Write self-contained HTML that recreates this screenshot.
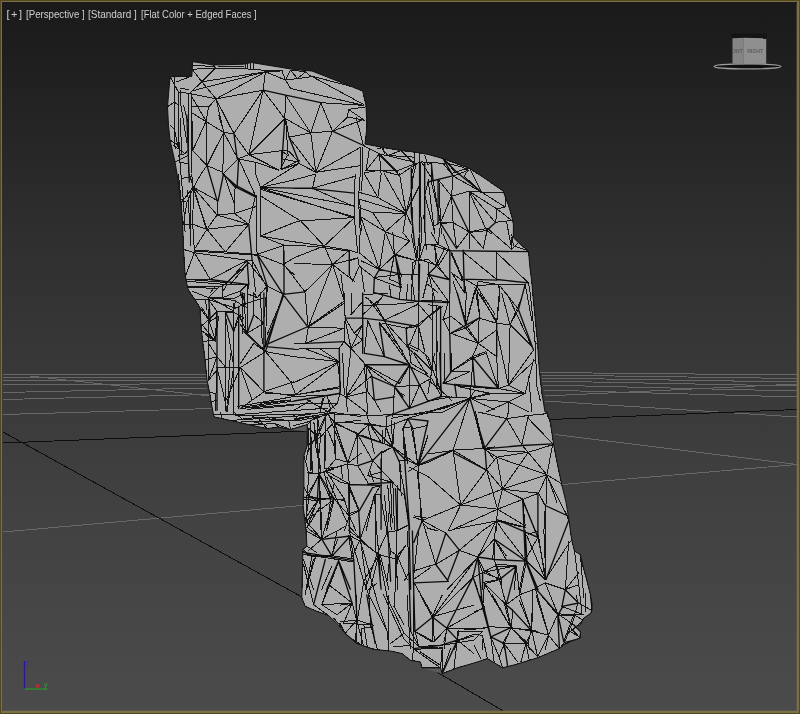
<!DOCTYPE html>
<html lang="en">
<head>
<meta charset="utf-8">
<title>Perspective viewport</title>
<style>
  html, body { margin: 0; padding: 0; background: #1c1c1c; }
  body { width: 800px; height: 714px; overflow: hidden; position: relative;
         font-family: "Liberation Sans", "DejaVu Sans", sans-serif; }
  #viewport { position: absolute; left: 0; top: 0; width: 800px; height: 714px;
              background: linear-gradient(to bottom, #1a1a1a 0px, #1c1c1c 30px, #262626 140px, #303030 250px, #393939 384px, #424242 518px, #4a4a4a 688px, #4b4b4b 714px); }
  #scene { position: absolute; left: 0; top: 0; width: 800px; height: 714px; display: block; will-change: transform; }
  #label { position: absolute; left: 0; top: 7px; width: 270px; height: 14px; will-change: transform; color: #cfcfcf; font-size: 11px; line-height: 14px;
           white-space: pre; }
  #label span { position: absolute; top: 0; display: block; transform-origin: 0 50%; white-space: pre; }
  #l1 { left: 6.4px; letter-spacing: 1.6px; }
  #l2 { left: 26px; transform: scaleX(0.88); }
  #l3 { left: 88.3px; transform: scaleX(0.907); }
  #l4 { left: 140.8px; transform: scaleX(0.862); }
  #frame { position: absolute; left: 0; top: 0; width: 800px; height: 714px; box-sizing: border-box;
           border: 1px solid #54481f; pointer-events: none; }
  #frame::before { content: ""; position: absolute; left: 0; top: 0; right: 0; bottom: 0;
           border: 2px solid #7c6f48; border-top-width: 1.6px; border-left-width: 1.6px; }
  #frame::after { content: ""; position: absolute; left: 2px; top: 2px; right: 2px; bottom: 2px;
           border: 1px solid transparent; border-right-color: rgba(112,102,66,0.4); border-bottom-color: rgba(112,102,66,0.4); }
</style>
</head>
<body>
<div id="viewport">
<svg id="scene" width="800" height="714" viewBox="0 0 800 714">
  <g id="grid" fill="none" stroke-width="1" shape-rendering="crispEdges">
    <g stroke="#686868">
      <path d="M3 374.5L210 374.5M540 372.5L797 375M3 377.5L208 377M541 375L797 378.5M3 380.5L208 380M541 378L797 382
               M3 385L208 383.5M541 381L797 386M3 392.5L208 388M542 385L797 391M3 399.5L210 394.5M543 390L797 397
               M3 414.5L212 408.5M545 401L797 417M30 376L210 396M545 396L797 384
               M3 532L302 505.5M562 484.5L797 464.5M555 434.5L797 464.5"/>
    </g>
    <g stroke="#0e0e0e">
      <path d="M3 443L307 431M550 419.5L797 409.5M3 432L302 597M430 668L505 712"/>
    </g>
  </g>
  <path id="backfaces" d="M290.5 429.6L307.2 424.6L307.2 431.5ZM422 667.9L440.5 667.9L442.2 673.7Z" fill="#5c5c5c"/>
  <clipPath id="rockclip"><polygon points="192.7,61.7 213.6,65 243.8,64.2 251.3,62.5 294,69.5 312,71 352.6,87 362.7,91 366,105 367,127 365,144 381,147 401,150.5 415,152 428,154.4 443,158.5 470,168.6 486.6,179.5 503.4,191.2 507.6,202.5 511.7,216 513.4,224 513.4,237.6 518.5,242.7 528.5,251 530,268 532,283 532.7,293 534.4,309.7 536,326.5 537.7,343 538.5,360 540,376.7 542,393.5 545,412 547,412 550.3,422 553.6,443.8 557,462 562,485.7 566,502 569,520 570.4,531 572,541 574.5,551 580.4,554.5 583,566 587,581 590.5,594.7 592,603.4 592,609.7 591.3,613 583.8,618 580.4,624.8 575.4,626.5 580.4,631.5 580.4,638 570.4,641.6 563.7,645 559.4,648.6 537.7,657.8 515.9,664.5 502.5,667.9 495.8,663.7 487.4,658.7 474,663 457.3,667.9 442.2,673.7 440.5,667.9 422,667.9 420.4,662 410.4,660.3 402,653.6 390.3,651 373.5,649.4 356.8,643.6 345,633.5 338,624.5 328.6,615.6 316.9,611.4 305.2,606.4 301.8,598 302.7,556 302.7,549.4 306.9,546 306,531 304.7,519 303,505.8 303.9,487.4 303.9,455.6 307.2,445.5 307.2,424.6 290.5,429.6 278.7,427 267,428.7 248.6,424.6 230,420.4 214.2,417 213,412 211,402 209.4,391.8 207,380 205,360 202.7,341.6 201,326.5 200,308 195,299.7 190,293 187.6,288 185,274.5 183.5,249.4 182.6,224 181.8,212 178.4,182 175,162 170,140 168.5,125.4 167.5,107 170,76.8 191.8,76"/></clipPath>
  <polygon id="rock" points="192.7,61.7 213.6,65 243.8,64.2 251.3,62.5 294,69.5 312,71 352.6,87 362.7,91 366,105 367,127 365,144 381,147 401,150.5 415,152 428,154.4 443,158.5 470,168.6 486.6,179.5 503.4,191.2 507.6,202.5 511.7,216 513.4,224 513.4,237.6 518.5,242.7 528.5,251 530,268 532,283 532.7,293 534.4,309.7 536,326.5 537.7,343 538.5,360 540,376.7 542,393.5 545,412 547,412 550.3,422 553.6,443.8 557,462 562,485.7 566,502 569,520 570.4,531 572,541 574.5,551 580.4,554.5 583,566 587,581 590.5,594.7 592,603.4 592,609.7 591.3,613 583.8,618 580.4,624.8 575.4,626.5 580.4,631.5 580.4,638 570.4,641.6 563.7,645 559.4,648.6 537.7,657.8 515.9,664.5 502.5,667.9 495.8,663.7 487.4,658.7 474,663 457.3,667.9 442.2,673.7 440.5,667.9 422,667.9 420.4,662 410.4,660.3 402,653.6 390.3,651 373.5,649.4 356.8,643.6 345,633.5 338,624.5 328.6,615.6 316.9,611.4 305.2,606.4 301.8,598 302.7,556 302.7,549.4 306.9,546 306,531 304.7,519 303,505.8 303.9,487.4 303.9,455.6 307.2,445.5 307.2,424.6 290.5,429.6 278.7,427 267,428.7 248.6,424.6 230,420.4 214.2,417 213,412 211,402 209.4,391.8 207,380 205,360 202.7,341.6 201,326.5 200,308 195,299.7 190,293 187.6,288 185,274.5 183.5,249.4 182.6,224 181.8,212 178.4,182 175,162 170,140 168.5,125.4 167.5,107 170,76.8 191.8,76" fill="#aeaeae" stroke="#111" stroke-width="1" stroke-linejoin="round"/>
  <g clip-path="url(#rockclip)">
  <path id="edges" d="M225.3 311.4L225.3 410.3M261.3 188.2L353.5 217.6M261.3 189.6L353.5 216.7M188.8 93.5L188.8 172.3M191.5 93.5L191.5 172.3M436.4 309.8L436.4 386.8M191.8 91L265.5 71.8M433 293L432.2 368.4M290.6 88.5L363.5 105.3M477.7 557L433.3 616.4M208.6 309.8L208.6 380.1M332.5 264.2L308.2 327.3M243.8 408.2L310.8 403.2M420.5 174L421.3 241M250.3 415.4L317.3 413.7M263 90.2L248.8 154.7M201.9 81.8L265.5 71.8M233.7 303.1L233.7 366.7M194.3 251.1L257.2 255.2M360.5 541.1L377.2 601.4M294 194.3L353.5 205.8M510.1 324.8L508.4 385.1M310.8 75.9L363.5 104.4M506.7 293L531.9 346.6M369.4 415.4L428 413.7M267.2 285.9L265.5 344.5M396.4 530.8L397.2 589.2M237.1 406.6L294 396.5M178.4 91.9L178.4 148.8M375.4 493.7L375.4 550.7M339.2 361.7L294 396M496.7 329.9L508.4 385.1M216.1 98.9L265.5 71.8M546.9 474.8L545.2 531M327.5 411.6L347.6 463.5M428 178.7L434.7 233.9M319.3 475.3L321.9 530.8M418 465.6L421.3 520.9M319.1 474L320.8 529.3M190.2 190.8L191 246M361 217.6L379.4 269.5M472.7 577.9L433.3 616.4M453.1 450.5L460.7 505M469.9 398.2L453.1 450.1M391.2 418.3L444.8 408.2M240.4 408.6L294 401M407 595L410.4 648.6M325.6 415.4L324 469M388.6 595L388.6 648.6M413.7 595L413.7 648.6M194.3 252.7L247.1 260.3M496.7 457.2L546.9 474.8M300.7 220.9L353.5 217.6M225.3 314.8L233.7 366.7M263 90.2L233.7 133.7M497.5 509.2L449.8 530.9M174.2 76.8L174.2 128.7M484.4 583.8L511.2 628.2M361 147.1L315.8 172.3M379.4 323.2L409.6 365M284.8 118.7L248.8 154.7M530.2 293L535.2 343.3M396.4 530.8L395.6 581.3M277.3 411.6L327.5 408.2M230.4 353L227.8 403.2M243.8 418.3L294 416.6M384.5 321.5L409.6 365M260.5 293L262.2 343.3M252.1 421.6L302.4 420M310.8 420L310.8 470.2M339.2 361.7L294 382.6M326.8 477L346.9 522.2M360.3 539L367 587.5M359.3 199.1L406.2 213.4M351 348.3L345.9 396.9M422.3 520.5L417.3 472M535.2 588L548.6 634.9M568.7 541.1L565.3 589.6M543.9 531L545.9 579.6M545.2 531L545.2 579.6M260.5 187.4L260.5 236M383.6 595L403.7 638.6M216.1 98.9L263 90.2M375.4 493.7L360.3 539M243.8 406.9L290.7 400.2M314.1 423.3L320.8 470.2M526.8 535.6L545.3 579.2M350.4 536L363.8 581.3M247.1 409.4L294 405.2M397.3 559.5L394 606.4M392.8 482.4L394.5 529.3M356.8 595L356.8 641.9M546.9 474.8L502.5 489.1M307.4 453.5L327.5 411.6M294 395.2L339.2 386.8M570.4 541.1L545.2 579.6M338.7 562L321.9 604.7M312.4 188.2L354.3 206.7M315.8 172.3L361 165.6M233.7 366.7L227 411.9M422.3 520.5L435.7 564.1M294 356.7L339.2 361.7M285.6 95.2L310.8 132.9M260.5 187.4L299 163.6M411.3 187L412.9 232.2M436.4 306L437.2 351.2M294 349.1L339.2 348.3M256.3 195.8L256.3 241M233.7 369.7L233.7 414.9M528.5 452.2L502.5 489.1M384.5 174L406.2 213.4M502.5 489.1L460.7 505M484.1 449.7L528.5 452.2M206.1 121.2L206.9 165.6M496.7 520.9L453.1 529.3M378.9 554.5L387.3 598M332.5 131.2L315.8 172.3M289 137.1L315.8 172.3M546.9 476.2L567 515.5M344.3 301L308.2 326.4M295.7 394.8L339.2 388.1M538.5 536L545.2 579.6M538.6 493.2L497.5 509.2M469.9 398.5L428 412M193.5 187.4L206.9 229.3M193.5 188.7L206.9 230.5M453.1 280.9L466.5 322.7M496.7 252.7L528.5 282.9M477.6 557.4L447.4 589.2M486.6 469.8L460.7 505M387.8 485.7L391.2 529.3M580.4 554.5L583.8 598M233.7 414.9L277.3 411.6M535.2 343.3L536.9 386.8M355.1 174L354.3 217.6M325.8 416.6L325.8 460.2M409.6 365L409.6 408.6M397.9 485.7L397.9 529.3M284 294.3L267.2 334.5M432.1 616.8L474 605.1M312.4 188.2L354.3 176.5M344.3 303.1L308.2 327.3M460.7 505L428 476.5M310.8 75.9L352.6 86.8M312.4 70.9L352.6 86.8M508.4 385.1L533.5 350M469 191.2L486.6 230.6M537.9 537.3L546.3 579.2M334.2 422.1L347.6 462.3M496.8 519.7L477.6 557.4M464 252.7L496.7 279.5M206.9 229.3L248.8 224.3M418.5 531L414.1 572.9M536 595L548.5 635.2M187.6 190.3L190.2 232.2M320.8 102.7L362.7 105.3M407.4 531L409 572.9M440.6 222.2L438.9 180.3M342.6 353L344.3 394.8M327.5 413.7L369.4 415.4M294 396.5L335.9 394.8M302.7 556.1L301.8 598M407.9 418.3L448.1 406.6M333.5 498.8L321.8 539M422.3 520.5L460.8 504.6M223.7 132.4L222.8 174M247.1 260.3L210.3 279.5M303.5 564.5L313.6 604.7M368.8 594.7L378.9 554.5M305.7 343.3L344.3 328.2M431.4 182L440.6 222.2M446.7 628.2L482.7 608.1M368.8 594.7L387.3 631.5M469 191.2L469 232.3M486.6 469.8L497.5 509.2M363.8 581.3L357.1 621.5M433 180.3L439.7 220.5M238.7 158.9L255.5 195.8M469 191.2L495 222.2M186.8 281.2L227 284.6M186.8 279.3L227 282.6M454.8 385.5L495 388.8M384.5 321.1L411.3 351.2M469.9 398.2L473.2 358M353.5 218.4L324.2 246M247.1 293L247.1 333.2M449.8 293L449.8 333.2M217 370.1L215.3 410.3M390.5 482L392.2 522.2M531.3 629.8L533 589.6M242.1 293L242.9 333.2M244.6 293L245.4 333.2M334.2 413.3L334.2 453.5M474.9 287.6L496.7 321.1M399.5 174L406.2 213.4M367.7 320.6L384.5 356.7M310.8 132.9L315.8 172.3M260.5 195.8L294 217M265.5 351.6L290.7 381.8M521.8 444.7L546.9 474.8M418 465.2L411.3 426.7M311.9 556.1L305.2 594.7M453.1 450.1L486.6 470.2M216.1 98.9L233.7 133.7M387.3 598L404 633.2M485.8 351.6L498.4 388.5M332.5 264.5L304.9 291.8M332.5 264.1L344.3 301M469.9 398.5L508.4 401.9M414.1 582.9L433.3 616.4M412.9 262.4L411.3 301M310.8 432.1L312.4 470.6M294 263.6L332.5 264.5M366 365L399.5 383.5M424.7 195.4L434.7 232.2M476.6 285.9L466.5 322.7M385.3 231.8L379.4 269.5M503.1 531L526.3 561.2M474.1 412L483.3 448.9M475.6 412L483.9 448.9M374.4 494.1L366 530.9M192.7 150.5L191.8 112.8M446.7 628.2L484.4 628.2M304.1 348.3L339.2 361.7M366 365L345.9 396.9M510.9 627.7L492.4 595M225.3 401.9L240.4 367.5M525.2 284.3L531.9 321.1M380.4 495.4L387.1 532.3M191.8 112.8L223.7 132.4M180.9 105.3L186.8 142.1M364.4 364.7L394.5 386.5M412.9 428.8L418 465.6M223.7 132.4L206.9 165.6M384.5 320.2L418 304.3M460.7 505L497.5 509.2M377.1 554L365.4 589.2M519.6 594.7L531.3 629.8M180.1 165.2L183.5 202.1M374.4 494.1L376.6 531M285.6 118.7L288.1 155.5M362.7 305.6L399.5 303.9M317.5 437.1L319.1 474M379.4 322.7L402.9 351.2M178.4 128.4L180.1 165.2M334.2 422.1L335.9 458.9M193.5 187.4L192.7 224.3M317.5 416.6L317.5 453.5M508.4 385.1L535.2 360M502.5 489.1L538.6 493.2M193.5 187.4L217 215M248.8 224.3L225.3 251.9M379.4 153.8L414.6 162.2M260.5 236L294 222.6M308.2 327.3L344.3 328.2M214.2 414.5L250.3 415.4M531.8 631L532.6 595M263 90.2L284.8 118.7M283.1 263.3L304.9 291.8M334.2 499.1L305.7 520.9M304.9 291.8L308.2 327.3M402.9 428.8L407.9 463.9M314.1 246.5L349.3 251.1M384.5 495.8L387.9 531M217 367.5L225.3 401.9M500 286L496.7 321.1M528.5 376.8L531.9 411.9M354.3 217.6L357.7 252.7M180.1 118.3L181.8 153.5M334.2 422.1L369.4 423.7M528.5 418.7L552.8 443.8M240.4 367.5L252.1 400.2M248.8 154.7L283.1 150.5M525.2 393.5L533.5 360M380.4 555.7L388.8 589.2M479.9 293L496.7 323.2M300.7 220.9L324.2 246M216.1 98.9L223.7 132.4M187.6 286L222 286M260.5 187.4L294 179.9M522.6 499.1L535.2 530.9M260.5 187.4L294 194.3M526.3 561.2L519.6 594.7M482.6 572.5L516.1 565.8M260.5 236L294 241.8M325.8 470.6L344.3 499.1M361 435L392.8 446.8M476.6 285.9L495 314.4M327.5 411.6L361 416.6M294 418.7L327.5 413.7M404.6 495.8L409.6 529.3M294 416.6L327.5 411.6M240.4 367.5L263.9 391.8M574.5 551.1L578.7 584.6M423.8 215.9L426.3 249.4M258.6 418.7L292.1 420.4M399.5 462.3L401.2 495.8M174.2 115L175.1 148.5M372.7 212.5L406.2 213.4M418 293L418 326.5M491.7 393.5L525.2 393.5M545.2 582.9L557.8 613.9M519.2 600L531.8 631M371.9 375.9L345.9 396.9M369.4 423.7L392.8 447.2M217 215L248.8 224.3M332.5 131.2L363.5 119.5M428.8 274.2L448.1 301M474.1 293L465.7 324.8M501.7 293L510.1 324.8M367.7 320.6L364.4 353.3M469 191.2L496.7 208.8M334.2 499.1L326.6 530.9M453.1 176.1L481.6 192.1M377.8 197.5L406.2 213.4M496.7 457.2L502.5 489.1M324.2 246L294 257.8M497.5 509.2L525.2 525.9M206.1 121.2L192.7 150.5M496.7 457.2L528.5 452.2M330.7 499.1L326.6 530.9M487.5 228.4L511.8 249.4M267.2 286L263.9 317.8M402.9 428.3L406.2 460.2M476.6 285.9L479.9 317.7M225.3 251.9L257.2 254.4M496.7 356.7L498.4 388.5M358.5 199.1L360.2 231M359.7 199.1L361.3 231M453.1 450.1L485 448.4M466.1 293L465.7 324.8M366 170.6L397.9 170.6M303.9 455.6L303.9 487.4M349.9 484L349.9 515.9M377.2 601.4L387.3 631.5M263.9 391.8L294 381.8M357.7 433.4L347.6 463.5M428 435.5L418 465.6M320.8 102.7L310.8 132.9M303.4 559.1L313.4 589.2M411.3 350L428 376.8M552.8 443.8L546.9 474.8M252.1 260.3L267.2 287.9M194.3 252.7L210.3 279.5M252.1 260.3L255.5 291.3M418 324.4L443.1 306M392.8 446.8L418 465.2M194.3 250.2L225.3 251.9M458.2 386.5L488.3 393.2M313.4 559.1L306.7 589.2M320.8 102.7L332.5 131.2M510.1 324.8L531.9 346.6M378.9 554.5L363.8 581.3M415.4 650.3L440.5 667.9M444.2 644.9L474.4 639.9M474.9 287.6L479.9 317.8M359.3 215.9L385.3 231.8M263.9 391.8L294 396M294 241.8L324.2 246M500 293L496.7 323.2M260.5 403.2L290.7 399.9M578.7 584.6L582.1 614.8M390.5 550.7L387.1 580.8M247.1 260.3L227 282.9M484.4 583.8L506.2 604.7M321.9 604.7L352.1 603M223.7 173.6L233.7 202.1M183.5 202.1L185.1 232.2M265.5 393.2L295.7 394.8M394.5 386.5L392.8 416.6M402.9 428.8L404.6 458.9M368.8 594.7L370.5 624.8M418.8 261.1L418 291.3M215.3 68.1L245.4 68.7M444.8 353L444.8 383.1M528.5 415.4L521.8 444.7M223.7 132.4L237.9 158.9M357.7 434.6L372.7 460.6M506.7 418.7L521.8 444.7M191 95.2L206.1 121.2M469.9 398.5L443.1 412M419.6 185.3L406.2 212.1M482.2 531L459.3 550.3M525.3 559.9L519.5 589.2M500 286L518.5 309.4M328.6 584.6L352.1 603M248.8 262.5L267.2 286M240.4 367.5L265.5 351.6M315.2 557.8L306.9 586.3M372.7 460.6L392.8 482.4M227 282.6L248.8 262.5M356 117L363.5 145.5M450.6 333.2L478.3 343.3M546.9 474.8L557 502.5M357.7 434.6L357.7 463.9M496.7 520.9L525.2 527.6M367.7 425L374.4 453.5M255.5 195.8L248.8 224.3M469.9 371.7L443.1 383.5M451.5 254.4L463.2 281.2M510.1 324.8L521.8 298M451.5 252.4L463.2 279.2M478.3 412L506.7 418.7M206.9 229.3L225.3 251.9M345.1 319.8L351 348.3M349.5 530.8L353.8 559.5M265.5 351.6L294 356.7M285.6 118.7L310.8 132.9M460.7 505L448.1 530.9M303.5 554.5L332 558.6M399.5 303.9L428 300.1M516.2 566.2L519.6 594.7M457.3 640.2L453.9 668.7M573.7 614.8L563.7 641.6M443.1 158.6L469.9 168.6M374.4 277.9L401.2 287.9M317.3 500.8L307.2 527.6M230.4 284.3L248.8 262.5M413.7 649.4L442.2 647.8M230.2 420.4L258.6 418.7M215.3 339.9L217 311.4M441.4 396.5L469.9 398.2M253.8 69.7L282.3 70.9M321.8 539L346.9 525.6M379.4 155.2L399.5 175.3M257.2 254.4L284 245.2M451.5 196.2L440.6 222.2M367.7 298L384.5 320.6M208.6 299.7L235.4 308.1M406.2 213.4L385.3 231.8M481.6 192.1L505.1 207.1M564.5 642.7L574.5 616.8M257.2 254.4L283.1 264.5M193.5 187.4L217.8 200.8M469.9 398.2L495 409.9M318.9 474L330.7 499.1M453.1 450.5L428 462.3M187.6 287.9L215.3 286.2M412.9 185.3L406.2 212.1M324 472.3L330.7 499.1M418 324.4L424.7 351.2M332.5 264.5L354.3 281.2M459.3 550.3L435.8 564.5M189.3 93.5L216.1 98.9M362.7 314.8L382.8 296.4M506.7 222.6L511.8 249.4M498.4 388.5L525.2 393.5M315.6 445.5L320.6 472.3M349.3 485.7L359.3 510.8M444.8 408.2L469.9 398.2M325.8 470.6L349.3 484M210.3 297.7L233.7 311.1M374.4 277.5L401.2 274.2M334.2 423.3L361 420M364.4 174L377.8 197.5M522.6 499.1L525.2 525.9M343.7 623.1L370.5 624.8M387.8 155.5L414.6 157.2M366 365L367.7 391.8M391.2 420L392.8 446.8M361 147.1L360.2 174M362.7 147.1L362.7 174M248.6 424.6L275.4 423.7M447.2 628.5L474 629.3M496.7 252.7L496.7 279.5M498.4 284.6L525.2 284.6M306.7 495.4L306.7 522.2M340.9 274.5L344.3 301M531.8 631L537.7 657M422.3 520.5L445.8 533.1M334.2 422.1L357.7 434.6M306.7 522.2L319.3 498.8M472.4 356.7L450.6 371.7M450.6 648.6L442.2 673.7M469.9 168.6L481.6 192.1M351 348.3L362.7 324.8M453.1 222.6L456.5 248.5M379.4 269.5L359.3 252.7M483.3 174L503.4 190.8M541 595L557.8 615.1M379.4 153.8L397.9 172.3M526.8 561.2L545.2 579.6M451.5 196.2L453.1 222.2M367.7 475.7L392.8 482.4M332.5 264.5L357.7 257.8M357.1 621.5L363.8 646.6M500 520.5L525.2 527.2M499.5 579.6L506.2 604.7M385.3 231.8L409.6 241M557.8 613.9L583.8 614.8M442.2 647.8L442.2 673.7M537.9 537.3L525.3 559.9M428.8 274.2L434.7 299.3M233.7 133.7L248.8 154.7M411.3 234L416.3 259.1M394.5 254.1L389.5 279.2M302.4 420L327.5 414.9M292.1 420.4L317.3 415.4M337 531L332 556.1M473.2 358L451.5 371.4M307.2 527.6L320.6 505.8M334.2 423.3L357.7 433.4M419.6 385.1L409.6 408.6M348.6 487L358.7 510.5M331.9 565.8L321.8 589.2M397.2 555.7L407.2 579.2M432.2 368.4L428 393.5M324.2 246L349.3 250.2M528.5 452.2L552.8 444.7M411.3 274.2L414.6 299.3M416.3 259.1L419.6 234M434.7 361.3L438.1 386.5M285.6 80.1L310.8 76.8M215.3 341.2L218.6 316.1M309.1 495.8L305.7 520.9M428 453.9L453.1 450.5M490.8 636.9L494.1 662M337.6 363L340.9 388.1M178.4 174L180.9 199.1M360.2 174L358.5 199.1M545.3 505.8L543.9 531M510.9 627.7L504.2 603.4M385.3 231.8L394.5 255.2M260.5 236L284 245.2M183.5 249.4L185.1 274.5M362.7 294.7L387.8 293M401.2 274.2L399.5 299.3M366 388.1L367.7 413.3M419.1 646.6L444.2 644.9M180.9 199.1L182.6 224.3M394.5 386.8L419.6 385.1M394.5 422.1L392.8 447.2M192.7 224.3L194.3 249.4M345.9 396.9L366 412M479.1 318.1L478.3 343.3M182.6 224.3L183.5 249.4M344.3 293L345.1 318.1M433.3 616.4L434.2 641.6M218.6 66.1L243.8 66.7M432.1 616.8L432.1 641.9M528 643.2L502.8 643.2M185.1 279.5L210.3 279.5M419.6 234L419.6 259.1M210.3 298L235.4 298M310.8 403.2L335.9 403.2M457.6 631.5L482.7 631.5M486.6 469.8L502.5 489.1M494.3 539L477.6 557.4M217 356.7L208.6 380.1M255.5 162.2L278.9 170.2M472.7 577.9L494.5 566.2M432.1 616.8L420.4 595M409.6 366.4L431.4 378.1M370.5 624.8L377.2 648.3M548.5 635.2L537.7 657M484.4 583.8L482.7 608.1M428.8 274.2L423 297.6M394.5 255.2L418 261.1M319.1 348.3L339.2 361.7M240.4 363.4L253.8 343.3M420.4 652L440.5 665.4M451.5 272.5L464.4 292.8M377.1 554L387.1 532.3M482.4 635.2L487.4 658.7M506.2 604.7L511.2 628.2M508.4 401.9L486.6 411.9M557 462.3L562 485.7M382.8 323.2L406.2 328.2M318.9 474L308.9 495.8M432.1 616.8L442.2 595M428 401L451.5 396.9M381.1 174L377.8 197.5M464 176.1L481.6 192.1M319.3 475.3L306.7 495.4M206.9 229.3L194.3 249.4M247.1 332.9L263.9 349.6M414.6 353L431.4 369.7M361 267.8L364.4 291.3M537.7 657.8L559.4 648.6M378.9 554.5L376.6 531M421.3 161.9L444.8 163.5M313.9 422.1L315.6 445.5M310.6 448.9L312.2 472.3M516.1 565.8L514.4 589.2M419.1 646.6L442.5 648.3M364.4 364.7L366 388.1M345.1 318.1L344.3 341.6M285.6 95.2L284.8 118.7M357.7 433.4L357.7 456.8M308.4 555.7L331.9 555.7M217 367.5L240.4 367.5M194.3 252.7L186 274.5M432.2 368.4L440.6 390.2M386.1 427.1L407.9 418.7M562 606.4L583.8 614.8M307.4 399.9L327.5 411.6M494.5 539.4L506.2 559.5M418 303.5L433 321.1M372.7 212.5L385.3 231.8M557.8 613.9L548.6 634.9M360.5 541.1L378.9 554.5M504.2 643.6L517.6 662M325.8 470.6L347.6 463.9M478.3 343.3L496.7 329.9M435.7 564.1L413.9 570.8M478.3 343.3L496.7 356.7M515.9 664.5L537.7 657.8M392.8 232.6L394.5 255.2M192.7 69.2L215.3 68.1M418 326.5L418.8 349.1M234.5 190.8L234.5 213.4M294 179.9L315.8 174M306.7 522.2L321.8 539M511.2 628.2L528 643.2M351 348.3L366 365M360.3 539L377.1 554M334.2 499.1L349.3 515.9M508.4 401.9L528.5 411.9M502.5 489.1L522.6 499.1M416.3 163.5L411.3 185.3M345.9 396.9L367.7 391.8M469.9 398.5L491.7 393.5M304.7 519.2L317.3 500.8M201.9 81.8L216.1 98.9M289 137.1L310.8 132.9M506.7 418.7L528.5 415.4M348.6 535.6L352 557.4M363.8 624.8L367.2 646.6M317.3 415.4L320.6 437.1M331.9 555.7L353.6 559.1M550.3 422.1L553.6 443.8M183.5 224.3L186.8 202.5M369.4 148.8L366 170.6M469 231.8L483.3 248.5M332.5 264.5L349.3 250.2M234.5 213.4L255.5 206.7M510.9 627.7L525.9 643.6M421.3 161.9L433 180.3M310.8 132.9L332.5 131.2M369.4 423.7L381.1 442.2M308.9 474L307.2 495.8M191.8 75.9L170.1 76.8M366 105.3L366.9 127M360.2 231L359.3 252.7M351.8 293L351 314.8M481.6 192.1L503.4 192.1M227 284.6L248.8 284.6M253.8 293L253.8 314.8M494.5 566.2L516.2 566.2M352.1 603L343.7 623.1M265.5 71.8L285.6 80.1M418 324.4L409.6 344.5M307.4 422.1L327.5 413.7M325.8 417L317.5 437.1M499.1 657L490.8 636.9M414.9 631.5L434.2 641.6M457.3 640.2L474 653.6M201.9 324.5L215.3 341.2M379.4 153.8L366 170.6M565.3 589.6L578.7 572.9M237.9 158.9L222.8 174M510.9 627.7L531.8 631M332 558.6L352.9 562M545.2 582.9L565.3 589.6M208.6 319.8L215.3 339.9M386.1 426.7L392.8 446.8M328.6 584.6L321.9 604.7M440.6 223.4L438.1 244.4M419.6 153L420.5 174M431.4 378.1L441.4 396.5M399.5 383.5L409.6 365M394 606.4L404 624.8M192.7 65.4L213.6 66.4M307.2 424.6L307.2 445.5M469 231.8L456.5 248.5M183.5 105.3L188.8 125.4M394.5 255.2L379.4 269.5M192.7 150.5L206.9 165.6M332.5 131.2L347.6 117M394.5 255.2L409.6 241M379.4 170.2L399.5 175.3M499.5 579.6L494.5 559.5M502.5 489.1L497.5 509.2M248.8 154.7L267.2 163.9M409.6 467.3L428 476.5M174.2 128.7L178.4 148.8M487.5 228.4L483.3 248.5M486.6 179.5L503.4 191.2M466.5 326.1L478.3 342.8M430.7 567.4L413.9 579.2M399.5 175.3L416.3 163.5M494.3 539L506.1 555.7M434.7 245.7L438.1 265.8M478.3 281.2L498.4 284.6M381.1 147.1L401.2 150.5M438.9 180.3L451.5 196.2M446.7 628.2L444.2 648.3M421.3 241L418.8 261.1M360.3 539L352 557.4M238.7 314.4L247.1 332.9M436.4 266.1L444.8 247.7M546.9 474.8L538.6 493.2M324.2 246L332.5 264.5M379.4 153.8L381.1 174M347.6 463.9L349.3 484M453.1 176.1L451.5 196.2M320.6 437.1L334 422.1M205.2 360L206.9 380.1M494.3 539L492.7 559.1M434.7 246L436.4 266.1M496 564.1L516.1 565.8M511.2 628.2L531.3 629.8M442.2 647.8L440.5 667.9M404 633.2L419.1 646.6M294 245.2L314.1 246.5M428 300.1L448.1 301.4M196.9 287.6L217 288.5M490.8 626.8L510.9 627.7M311.9 556.8L332 556.8M381.1 472.3L381.1 452.2M494.5 539.4L494.5 559.5M469.9 168.6L486.6 179.5M299 160.5L281.4 169.4M465.7 328.2L478.3 343.3M519.6 594.7L538 588M222 297.7L240.4 291M482.6 572.5L501 579.2M459.3 550.3L477.7 557M406.2 213.4L402.9 232.6M407.9 344.1L411.3 363.4M411.3 363.4L428 373.4M263.9 323.2L247.1 333.2M294 410.3L310.8 400.2M357.7 465.6L367.7 482.4M415.4 631.9L432.1 641.9M361 260.8L378.6 269.1M496.8 519.7L494.3 539M284 245.2L283.1 264.5M557.8 613.9L573.7 624.8M281.4 150.1L281.4 169.4M431.4 162.7L431.4 182M450.6 371.7L469.9 371.7M306.7 527.2L321.8 539M488.3 393.2L469.9 398.2M303.9 455.6L308.9 474M352.1 603L357.1 621.5M525.9 643.6L520.9 662M359.3 266.1L374.4 277.9M496.7 208.8L511.8 220.5M359.3 192.4L377.8 197.5M378.9 554.5L397.3 559.5M352.1 603L337 614.8M201.9 81.8L215.3 68.4M401.2 150.5L414.6 163.9M565.3 589.6L578.7 603M541.9 393.5L546.1 412M248.6 424.6L267 428.8M230.2 420.4L248.6 424.6M315.8 172.3L299 163.5M267.2 286L284 294.3M419.6 384.8L428 401.5M508.4 385.1L525.2 393.5M387.1 532.3L390.5 550.7M553.6 443.8L557 462.3M285.6 118.7L289 137.1M508.4 401.9L525.2 393.5M482.6 582.5L501 579.2M202.7 341.6L205.2 360M265.5 71.8L263 90.2M313.6 604.7L328.6 615.6M281.4 169.4L299 163.5M294 69.2L312.4 70.9M367.7 425L386.1 426.7M512.9 609.7L511.2 628.2M476.6 285.9L495 284.2M388.8 513.8L387.1 532.3M357.1 621.5L355.4 639.9M387.3 631.5L388.9 649.9M528.5 415.4L546.9 413.7M200.2 308.1L201 326.5M303.9 487.4L303 505.8M451.5 316.5L465.7 328.2M451.5 353L451.5 371.4M585.4 593L585.4 611.4M422.1 667.9L440.5 667.9M453.1 222.6L469 231.8M436.4 266.1L448.9 279.5M446.7 628.2L434.2 641.6M451.5 196.2L469 191.2M479.1 318.1L496.7 323.2M348.4 109.4L363.5 119.5M321.9 604.7L337 614.8M438.1 265.8L448.1 250.7M327.3 428.8L334 445.5M397.9 170.6L414.6 163.9M191.8 291L208.6 297.7M233.7 331.5L240.4 314.8M443.1 234L449.8 250.7M424.7 353L431.4 369.7M363.5 145.5L379.4 153.8M306 531L321.9 539.4M234.5 213.4L248.8 224.3M237.9 158.9L255.5 162.2M487.5 228.4L469.9 231.8M360.3 539L348.6 525.6M356.8 620.1L345 633.5M351 314.8L362.7 301.4M321.8 539L308.4 550.7M525.9 643.6L537.7 657M392.8 482.4L404.6 495.8M348.4 109.4L366 106.9M356.8 643.6L373.5 649.4M457.3 640.2L474 634.4M496.7 520.9L482.2 531M546.9 474.8L562 484M345.1 318.1L354.3 333.2M217 215L234.5 213.4M469 231.8L469 249.4M457.3 640.9L474 635.9M218.6 115L223.7 131.7M448.1 302.6L443.1 319.4M247.1 303.1L263.9 298M233.7 331.2L238.7 314.4M290.5 429.6L307.2 424.6M356.8 620.1L373.5 625.2M394.5 254.1L411.3 259.1M344.3 499.1L349.3 515.9M217 215L206.9 229.3M457.3 667.9L474 663.3M548.5 635.2L559.4 648.6M414.6 244.4L418.8 261.1M206.9 165.6L222.8 172.3M510.9 627.7L504.2 643.6M531.8 631L548.5 635.2M484.4 571.2L499.5 579.6M518.5 309.4L510.1 324.5M170.1 76.8L178.4 91.9M376.1 305.2L384.5 320.2M511.2 628.2L502.8 643.2M410.7 631.5L419.1 646.6M201.9 81.8L189.3 93.5M317.3 500.8L334 497.4M299 162.2L282.3 158.9M317.3 415.4L334 412M525.9 643.6L529.3 660.3M431.4 369.7L434.7 353M474.9 390.2L491.7 393.5M400.5 472L403.9 488.7M347.6 117L364.4 120.3M305.5 462.3L308.9 445.5M369.4 423.7L386.1 427.1M337.7 539L331.9 554.9M474 629.3L490.8 626.8M532.7 293L534.4 309.8M362.7 174L361 190.8M540.2 376.8L541.9 393.5M366.9 127L365.2 143.8M536 326.5L537.7 343.3M373.5 649.4L390.3 651.1M356.8 620.1L340 621.8M393.6 646.9L410.4 645.3M411.3 168.6L412.9 185.3M486.6 230.6L469.9 232.3M320.6 437.1L318.9 453.9M528.5 251.1L530.2 267.8M534.4 309.8L536 326.5M538.6 360L540.2 376.8M537.7 343.3L538.6 360M265.5 71.8L282.3 70.9M557.8 615.1L574.5 615.1M519.6 594.7L506.2 604.7M191.8 106.9L208.6 106.9M401.2 274.5L418 274.5M247.1 284.3L247.1 301M308.9 428.8L308.9 445.5M181.8 202.1L191.8 188.7M438.1 265.8L448.1 279.2M347.6 463.5L361 453.5M465.7 328.2L479.1 318.1M390.3 643.6L403.7 633.5M208.6 297.7L220.3 286M186.8 202.5L193.5 187.4M359.3 266.1L352.6 281.2M349.3 515.9L356 530.9M214.2 417L230.2 420.4M365.2 143.8L381.1 147.1M453.1 176.1L468.2 170.3M176.8 81.8L191.8 75.9M275.4 423.7L290.5 429.6M442.2 673.7L457.3 667.9M308.2 327.3L305.7 343.3M444.8 159.4L454.8 171.9M496.7 457.2L486.6 469.8M428 316.5L440.6 306.4M428 380.1L440.6 390.2M357.7 434.6L369.4 423.7M495.8 222.2L511.8 220.5M450.6 333.2L465.7 328.2M424.7 244L419.6 259.1M513.4 245.8L528.5 250.8M372.7 460.6L367.7 475.7M349.3 515.9L344.3 530.9M477.6 557.4L482.6 572.5M496 564.1L501 579.2M201.9 307.7L210.3 321.1M307.2 445.5L320.6 437.1M208.6 343.3L217 356.7M477.7 557L484.4 571.2M428 154.1L443.1 158.6M484.4 583.8L499.5 579.6M582.9 566.2L587.1 581.3M324.2 396.9L320 411.8M240.4 291L243.8 306.1M412.9 428.8L428 425.4M340.9 388.1L337.6 403.2M443.1 163.6L453.1 175.3M267.2 286L257.2 297.7M325.8 470.6L335.9 458.9M330.7 499.1L334 484M548.6 634.9L545.2 649.9M416.3 259.1L412.9 274.2M415.4 631.9L418.7 646.9M485 448.4L495 460.2M333.7 618.1L343.7 629.8M201 174L193.5 187.4M364.4 172.8L379.4 170.2M407.9 284.2L406.2 299.3M345.9 396.9L347.6 411.9M308.9 474L324 472.3M386.1 427.1L384.5 442.2M290.6 70.1L305.7 71.8M201 326.5L202.7 341.6M530.2 267.8L531.9 282.9M306.2 531L306.9 546.1M484.1 448.9L496.7 457.2M192.7 224.3L206.9 229.3M202.7 331.5L215.3 339.9M180.9 90.2L180.9 105.3M505.1 192.1L505.1 207.1M428 412L443.1 412M361.8 628.5L361.8 643.6M474 645.3L480.7 658.7M175.1 161.9L188.5 155.2M287.3 155.2L280.6 168.6M404.6 458.9L418 465.6M443.1 319.4L449.8 332.8M192.7 70.1L201.9 81.8M283.1 264.5L294 274.5M440.6 390.2L451.5 400.2M289 151.3L299 162.2M362.7 91L366 105.3M315.8 174L312.4 188.2M478.3 343.3L472.4 356.7M208.6 106.9L206.1 121.2M464 278.7L466.1 293M252.1 400.2L240.4 408.6M360.3 539L348.6 530.6M200.2 308.1L208.6 319.8M208.6 299.7L217 311.4M253.8 343.3L265.5 351.6M263.9 391.8L252.1 400.2M351 348.3L362.7 339.9M451.5 272.8L463.2 281.2M255.5 174L260.5 187.4M434.7 245.7L448.1 250.7M473.2 358L486.6 353M472.4 356.7L485.8 351.6M363.8 581.3L368.8 594.7M504.2 643.6L499.1 657M479.7 595L484.7 608.4M387.8 155.5L401.2 150.5M359.3 207.5L372.7 212.5M290.7 381.4L295.7 394.8M472.6 575.8L477.6 589.2M565.3 589.6L578.7 584.6M217.8 200.8L217 215M538.6 493.2L545.3 505.8M403.7 638.6L413.7 648.6M474 663.3L487.4 658.7M189.3 174L193.5 187.4M507.6 202.5L511.8 215.9M531.8 631L525.9 643.6M294 425.4L307.4 422.1M587.1 581.3L590.5 594.7M502.5 667.9L515.9 664.5M448.1 163.6L461.5 166.9M367.7 475.7L381.1 472.3M447.2 628.5L443.9 641.9M222 297.7L235.4 301M531.3 629.8L528 643.2M536.9 386.8L540.2 400.2M327.5 396.9L330.9 410.3M363.8 646.6L377.2 649.9M322.5 398.2L320 411.8M428 182L424.7 195.4M307.2 424.6L317.3 415.4M185.1 274.5L187.6 287.9M418.8 326.5L428 316.5M414.6 515.9L428 518.4M414.6 152.2L428 154.1M476.6 285.9L464.9 279.2M397.3 559.5L404 547.8M392.8 446.8L381.1 453.5M578.7 603L590.5 609.7M496.7 323.2L510.1 324.8M340.9 465.6L342.6 479M401.2 150.5L414.6 152.2M411.3 353L409.6 366.4M431.4 232.6L438.1 244.4M374.4 400.2L381.1 411.9M329.2 475.7L340.9 482.4M303 505.8L304.7 519.2M303.9 499.1L317.3 500.8M399.5 274.5L401.2 287.9M419.6 384.8L431.4 378.1M241.9 421.2L255.3 422.1M191.8 174L192.7 187.4M496.7 208.8L495.8 222.2M257.2 254.4L256.3 241M382.8 430L382.8 443.4M195.2 299.7L208.6 299.7M208.6 297.7L222 297.7M513.4 224.3L513.4 237.7M267.2 163.9L278.9 170.2M438.1 244.4L449.8 250.2M337.6 403.2L327.5 411.6M518.5 242.7L528.5 251.1M258.6 418.7L267 428.8M317.5 437.1L307.4 445.5M208.6 380.1L217 370.1M217 356.7L225.3 366.7M428 284.6L438.1 292.9M253.8 314.8L263.9 323.2M397.2 555.7L405.6 545.7M306.7 495.4L319.3 498.8M283.1 264.5L294 257.8M381.1 452.2L392.8 447.2M235.4 308.1L247.1 303.1M381.8 442.8L393.5 447.8M305.2 606.4L316.9 611.4M389.5 279.2L401.2 284.2M202.7 341.6L215.3 339.9M428 304.7L440.6 306.4M469 191.2L481.6 192.1M440.6 223.4L453.1 222.6M376.1 305.2L366 297.6M453.1 222.2L440.6 222.2M478.3 281.2L474.1 293M328.6 615.6L337 624.8M316.9 611.4L328.6 615.6M428 356.7L432.2 368.4M366 365L371.9 375.9M366 412L369.4 423.7M506.7 198.8L510.1 210.5M205.2 360L217 356.7M255.3 422.1L267 425.4M335.9 458.9L347.6 462.3M510.1 210.5L513.4 222.2M418 324.4L406.2 327.8M577.9 603.4L574.5 615.1M353.8 639.9L363.8 646.6M327.5 398.2L334.2 408.2M205.2 334.5L215.3 341.2M418 465.2L407.9 471.9M306.9 546.1L316.9 552.8M406.2 213.4L411.3 224.3M418.8 349.1L407.9 344.1M206.9 380.1L209.4 391.8M278.7 427.1L290.5 429.6M390.3 651.1L402 653.6M407.1 346.2L418 351.2M580.4 554.5L582.9 566.2M496.7 520.9L503.1 531M418.8 349.1L428 356.7M304.7 519.2L306.2 531M413.7 648.6L412 660.3M511.8 234L513.4 245.8M223.7 299.7L235.4 298M513.4 222.2L515.1 233.9M436.4 266.1L428 274.5M406.2 328.2L418 326.5M354.3 333.2L362.7 324.8M399.5 460.2L401.2 471.9M309.1 428.8L317.5 437.1M337 624.8L345.4 633.2M340 605.1L351.7 603.4M208.6 319.8L217 311.4M267 428.8L278.7 427.1M307.4 472.3L319.1 474M389.5 285.9L391.2 297.6M474.4 639.9L482.7 631.5M255.5 162.2L255.5 174M440.6 222.2L441.4 233.9M497.5 509.2L496.7 520.9M428 262.4L428.8 274.2M414.6 152.2L414.6 163.9M511.8 237.7L511.8 249.4M222 297.7L222 286M294 343.3L305.7 343.3M237.9 158.9L248.8 154.7M376.1 305.2L382.8 295.9M183.5 249.4L194.3 252.7M499.1 657L502.5 667.9M285.6 80.1L290.6 70.1M407.9 418.7L402.9 428.8M397.2 530.6L407.2 525.6M350.4 536L360.5 541.1M535.2 588L545.2 582.9M340 623.5L345 633.5M359.3 510.8L349.3 515.9M216.1 98.9L208.6 106.9M178.4 91.9L189.3 93.5M546.1 412L550.3 422.1M352.6 86.8L362.7 91M402.9 232.6L409.6 241M240.4 324.8L247.1 333.2M297.4 78.5L305.7 71.8M402 653.6L410.4 660.3M381.1 147.1L387.8 155.5M567.8 633.5L576.2 626.8M367.7 391.8L374.4 400.2M233.5 412L241.9 418.7M327.5 413.7L334.2 422.1M290.6 70.1L297.4 78.5M354.3 333.2L362.7 339.9M377.2 582.9L368.8 589.6M428 259.4L436.4 266.1M324 472.3L334 469M498.4 388.5L508.4 385.1M358.7 510.5L348.6 513.8M538 531L528 534.4M451.5 173.6L461.5 170.2M428 262.4L438.1 265.8M307.2 445.5L303.9 455.6M370.4 472L373.7 482M457.6 639.9L454.3 649.9M474 611.8L484.1 608.4M418 465.6L428 462.3M414.6 163.9L411.7 174M270.4 419.5L280.4 417M572 541.1L574.5 551.1M428 528.4L438.1 530.9M206.9 165.6L201 174M528.5 282.9L530.2 293M211.1 401.9L212.7 412M324 469L334 467.3M485 448.4L495 446.8M570.4 531L572 541.1M424.7 244L434.7 245.7M225.3 401.9L227 411.9M205.2 299.4L206.9 309.4M347.6 463.9L357.7 465.6M333.5 498.8L343.6 500.4M458.9 630.2L457.3 640.2M209.4 391.8L211.1 401.9M235.4 301L233.7 311.1M225.3 311.4L235.4 313.1M387.1 532.3L397.2 530.6M410.4 660.3L420.4 662M361.8 628.5L371.8 626.8M418 261.1L428 259.4M360.5 541.1L359.1 531M223.7 132.4L233.7 133.7M531.9 282.9L532.7 293M508.4 401.9L508.4 412M201 326.5L208.6 319.8M421.3 520.9L428 528.4M428 244.4L438.1 244.4M386.1 416.6L386.1 426.7M334.2 412L334.2 422.1M334.2 499.1L344.3 499.1M496.7 520.9L496.7 530.9M501 579.2L501 589.2M482.7 639.9L482.7 649.9M284 245.2L294 245.2M442.2 319.8L451.5 316.5M227 284.6L222 293M469.9 398.5L474.9 390.2M570.4 631.5L578.7 636.5M170.1 140.1L178.4 145.1M308.9 495.8L317.3 500.8M285.6 80.1L290.6 88.5M235.4 313.1L243.8 318.1M235.4 298L243.8 293M235.4 301L243.8 306.1M195.2 299.7L200.2 308.1M210.3 321.1L218.6 316.1M303.9 487.4L308.9 495.8M375.4 493.7L380.4 485.4M487.4 658.7L495.8 663.7M404 581.3L409 572.9M574.5 615.1L582.9 620.1M424.7 155.5L428 164.6M511.8 249.4L518.5 242.7M344.3 341.6L351 348.3M576.2 626.8L582.9 620.1M240.4 291L247.1 284.3M571.2 628.5L577.9 635.2M288.8 420.4L290.5 429.6M419.6 259.1L428 262.4M301.8 598L305.2 606.4M282.3 71.8L285.6 80.1M349.3 261.1L357.7 257.8M250.3 415.4L258.6 418.7M422.3 520.5L413.9 517.2M257.2 297.7L248.8 294.3M180.1 162.2L188.8 163.9M349.3 250.2L357.7 252.7M321.9 539.4L321.9 530.8M248.8 284.6L247.1 293M498.4 284.6L500 293M511.8 215.9L513.4 224.3M505.1 207.1L496.7 208.8M357.7 257.8L359.3 266.1M372.7 487.4L381.1 485.7M340.9 482.4L349.3 484M577.9 603.4L576.2 595M233.7 311.1L225.3 312.8M411.3 426.7L402.9 428.3M245.4 68.7L253.8 69.7M180.1 88.5L188.5 89.3M474 634.4L482.4 635.2M190.2 293L195.2 299.7M178.4 148.8L185.1 153.8M167.5 106.9L174.2 101.9M215.3 286.2L210.3 292.9M344.3 341.6L339.2 348.3M293.8 415.4L300.5 420.4M390.5 550.7L397.2 555.7M217 311.4L225.3 311.4M280.6 150.1L287.3 155.2M303.4 549L308.4 555.7M457.6 631.5L457.6 639.9M495.8 663.7L502.5 667.9M294 217L300.7 220.9M181.8 178.6L189.3 176.9M559.4 648.6L564.5 642.7M347.6 117L348.4 109.4M185.1 224.3L192.7 224.3M412.9 262.4L419.6 259.1M319.1 474L325.8 470.6M461.5 166.9L468.2 170.3M397.9 391.8L404.6 395.2M570.4 641.6L563.7 644.9M352.6 281.2L349.3 274.5M339.2 393.5L345.9 396.9M583.8 618.1L580.4 624.8M468.2 170.3L464 176.1M305.7 71.8L310.8 76.8M513.4 237.7L518.5 242.7M563.7 644.9L558.6 649.9M508.4 412L506.7 418.7M222 293L223.7 299.7M531.3 629.8L538 631.5M461.5 170.2L468.2 168.6M208.6 391.8L215.3 393.5M178.4 155.5L185.1 153.8M210.3 401.9L217 400.2M361 423.3L367.7 425M502.8 643.2L504.5 649.9M528 643.2L529.6 649.9M294 222.6L300.7 220.9M574.5 551.1L580.4 554.5M180.9 199.1L186.8 202.5M440.6 222.2L434.7 225.6M374.4 494.1L381.1 494.1M399.5 460.2L406.2 460.2M302.7 549.4L302.7 556.1M253 63.4L253.8 69.7M185.1 153.8L188.8 148.8M382.8 147.6L384.5 153.5M420.4 662L422.1 667.9M220.1 412L221.8 417.9M440.5 667.9L442.2 673.7M173.4 145.5L178.4 148.8M222 286L227 282.6M486.6 230.6L491.7 233.9M253.8 292.7L257.2 297.7M283.1 150.5L289 151.3M247.9 63L247.9 68.7M250.5 63L250.5 68.7M187.6 287.9L190.2 293M170.1 125.4L174.2 128.7M306.9 546.1L302.7 549.4M174.2 101.9L178.4 105.3M245.4 63.4L245.4 68.7M212.7 412L214.2 417M580.4 624.8L575.4 626.5M416.3 163.5L421.3 161.9M236.2 185.7L234.5 190.8M567 515.5L568.7 520.5M377.8 148.5L382.8 147.6M247.1 260.3L252.1 260.3M181.8 153.5L178.4 156.8M275.4 423.7L278.7 427.1M267 416.2L270.4 419.5M428 164.6L431.4 162.7M243.8 306.1L247.1 307.7M290.7 381.8L294 382.6M535.2 343.3L537.7 343.3" shape-rendering="crispEdges" fill="none" stroke="#151515" stroke-width="1" stroke-linecap="round" stroke-linejoin="round"/>
  <path id="ridges" d="M238.7 306.4L238.7 408.6M263.9 293L263.9 391.8M217 311.4L217 410.3M469.9 398.2L418 465.2M440.6 306.4L440.6 390.2M449.8 250.7L528.5 251.7M404.6 458.9L409.6 529.3M419.6 161.9L419.6 232.2M381.1 458.9L381.1 529.3M424.7 163.5L424.7 232.2M186.8 115L189.3 182M408.9 525.6L410.6 589.2M568.7 520.5L546.1 579.2M353.8 559.5L357.1 621.5M265.5 351.6L283.1 294.3M522.8 500.4L525.3 559.9M284 294.3L263.9 349.6M409 572.9L410.7 631.5M413.2 572.9L414.9 631.5M472.7 577.9L446.7 628.2M469.9 398.2L485 448.4M477.7 557L482.7 608.1M303.4 552.4L353.6 560.7M284.8 118.7L281.4 168.9M387.9 531L390.6 581.3M366.8 595L375.2 643.6M257.2 254.4L283.1 294.3M348.6 483.7L349.5 530.8M325.3 559.5L313.6 604.7M265.5 344.9L308.2 326.5M294 401L339.2 393.5M418 465.2L428 421M339.2 348.3L340.1 393.5M364.4 364.7L409.6 364.7M496.8 519.7L537.9 537.3M537.9 492.9L537.9 537.3M411.3 168.6L411.3 212.5M454.8 384.3L498.4 388.5M439.7 353L441.4 396.5M438.1 180.3L438.1 223.8M284 250.8L284 294.3M338.7 562L352.1 603M518.5 309.8L533.5 350M449.8 250.2L449.8 293M463.2 250.2L464.4 292.8M312.4 188.7L354.3 193.1M395.5 488.7L397.2 530.6M412.4 531L413.2 572.9M283.1 294.3L308.2 327.3M472.4 356.7L498.4 388.5M451.5 196.2L469 232.3M522.8 500.4L537.9 537.3M516.2 566.2L506.2 604.7M210.3 279.5L248.8 284.6M305.7 343.3L344.3 341.6M494.5 539.4L526.3 561.2M449.8 333.2L450.6 371.7M453.1 450.1L418 465.2M453.5 452.9L487 470.5M484.1 448.9L521.8 445.5M506.7 418.7L484.1 448.9M403.9 488.7L408.9 525.6M419.6 264.1L418.8 301M457.3 640.2L442.2 673.7M206.9 165.2L217 200.4M248.8 224.3L252.1 260.3M377.8 554L381.1 589.2M362.7 318.1L362.7 353.3M535.2 588L557.8 613.9M414.1 582.9L448.4 581.3M332.5 131.2L363.5 145.5M384.5 320.6L418 326.5M409.6 408.2L441.4 396.5M395.2 254.1L400.2 287.6M379.4 323.2L384.5 356.7M557.8 615.1L559.4 648.6M260.5 187.4L294 188.2M496.7 323.2L496.7 356.7M459.2 549.9L447.4 580.8M257.2 254.4L267.2 285.9M457.3 293L465.7 324.8M464 279.2L496.7 280.2M445.8 533.1L435.7 564.1M473.3 577.9L483.4 608.7M479.9 317.7L451.5 332.8M456.5 172L481.6 192.1M496.7 279.5L528.5 282.9M411.3 212.5L414.6 244.4M416.3 301L448.1 302.6M494.5 559.5L526.3 561.2M378.9 554.5L380.6 586.3M348.6 484.5L380.4 485.4M482.7 608.1L491.1 638.2M525.3 559.9L536.2 589.2M521.8 445.5L552.8 443.8M526.3 561.2L538 589.6M338.6 560.7L326.8 589.2M338.6 560.7L350.3 589.2M525.2 530.8L526.9 561.2M472.4 356.7L474.9 386.8M304.1 497.4L334.2 499.1M440.6 223.4L456.5 248.5M243.8 331.5L265.5 351.6M319.1 474L334.2 499.1M484.1 608.4L490.8 636.9M321.9 539.4L350.4 536M265.5 346.6L294 349.1M358.7 510.5L360.3 539M238.7 158.5L237.1 187M512.5 610.1L531.8 631M557.8 613.9L563.7 641.6M218.1 200.8L223.5 173.8M294 96.9L320.8 102.7M350.4 536L332 556.1M289 137.1L299 162.2M413.7 648.6L440.5 645.3M359.3 510.8L372.7 487.4M233.7 131.7L237.1 158.5M318.9 474L317.3 500.8M384.5 356.7L409.6 365M409.6 365L394.5 386.8M394.5 386.8L409.6 408.6M374.4 292.6L399.5 299.3M525.2 284.3L518.5 309.4M371.1 376.4L394.5 386.5M367.7 484L392.8 482.4M362.7 293L362.7 318.1M386.1 416.6L409.6 408.2M358.3 435.1L381.8 442.8M371.9 375.9L374.4 400.2M247.1 260.3L248.8 284.6M349.3 250.2L349.3 274.5M428 182L451.5 176.1M545.3 505.5L567 515.5M433.3 616.4L414.9 631.5M208.6 297.7L210.3 321.1M422.3 520.5L413.9 542.3M263 90.2L285.6 95.2M378.6 269.1L401.2 274.2M235.4 187L255.5 197M409.6 365L419.6 385.1M510.9 627.7L490.8 636.9M504.2 643.6L507.5 665.4M283.1 294.3L304.9 291.8M362.7 318.1L384.5 320.6M485 448.4L486.6 470.2M225.3 311.4L233.7 331.5M236.2 185.7L255.5 195.8M477.7 557L472.7 577.9M428 274.5L448.9 279.5M499.5 579.6L516.2 566.2M445.8 533.1L459.2 549.9M435.8 564.5L448.4 581.3M374.4 400.2L394.5 396.9M364.4 353.3L384.5 356.7M443.1 158.6L453.1 176.1M407.9 418.7L428 421M395.2 255.2L400.2 274.5M247.1 333.2L253.8 314.8M321.9 539.4L332 556.1M447.2 628.5L432.1 616.8M443.1 158.6L456.5 172M406.2 327.8L407.1 346.2M294 188.2L312.4 188.2M223.7 174.4L235.7 187.7M222.8 174L236.2 185.7M345.1 318.1L362.7 318.1M440.5 645.3L457.3 640.2M565.3 589.6L562 606.4M562 606.4L578.7 603M477.7 557L494.5 559.5M431.4 163.5L433 180.3M399.5 299.3L416.3 301M482.6 572.5L482.6 589.2M392.8 447.2L404.6 458.9M392.8 447.2L399.5 462.3M446.7 628.2L457.6 639.9M357.7 465.6L372.7 460.6M564.5 642.7L579.5 638.6M345 633.5L356.8 643.6M590.5 594.7L592.1 609.7M374.4 277.5L373.6 292.6M490.8 636.9L504.2 643.6M451.5 371.4L443.1 383.1M495.8 222.2L486.6 230.6M503.4 190.8L507.6 202.5M242.1 292.7L245.4 304.4M454.8 384.8L456.5 396.5M372.7 460.6L381.1 452.2M443.1 383.1L454.8 384.8M407.9 418.7L412.9 428.8M582.9 620.1L591.3 613.4M504.2 603.4L512.5 610.1M396.2 388.5L402.9 396.9M302.7 551.1L311.9 556.1M591.3 613.4L592.1 603.4M557.8 615.1L562.8 606.7M379.4 269.5L374.4 277.9M573.7 624.8L580.4 631.5M285.6 95.2L294 96.9M579.5 638.6L581.2 631.9M213.6 65.1L215.3 68.1" fill="none" stroke="#0c0c0c" stroke-width="1.35" stroke-linecap="round" stroke-linejoin="round"/>
  </g>
  <g id="viewcube" font-family="Liberation Sans, sans-serif" font-size="5.2" font-weight="bold">
    <clipPath id="cf"><rect x="732.5" y="38" width="11.4" height="26"/></clipPath>
    <ellipse cx="747.5" cy="66.4" rx="33.4" ry="2.5" fill="#0e0e0e" stroke="#9c9c9c" stroke-width="1.3"/>
    <path d="M731.5 33.5L767 33.5L767 38L731.5 38Z" fill="#141414"/>
    <path d="M732.5 38.3L743.9 37.8L743.9 64.3L732.5 63.8Z" fill="#858585"/>
    <path d="M743.9 37.8L766.2 38.3L766.2 63.8L743.9 64.3Z" fill="#8f8f8f"/>
    <text x="743" y="53.4" text-anchor="end" fill="#5e5e5e" clip-path="url(#cf)">FRONT</text>
    <text x="755.2" y="53.4" text-anchor="middle" fill="#5e5e5e">RIGHT</text>
  </g>
  <g id="gizmo" fill="none" stroke-width="1.4">
    <path d="M24.5 661L24.5 689" stroke="#2a1a9a"/>
    <path d="M24.5 689L47.5 689" stroke="#2f8f2f"/>
    <circle cx="37.5" cy="686" r="2" fill="#b03030" stroke="none"/>
    <text x="25" y="665" font-size="7" fill="#3a2ab0" stroke="none" font-family="Liberation Sans, sans-serif">z</text>
    <text x="44" y="687" font-size="7" fill="#35a035" stroke="none" font-family="Liberation Sans, sans-serif">y</text>
  </g>
</svg>
<div id="label"><span id="l1">[+]</span><span id="l2">[Perspective ]</span><span id="l3">[Standard ]</span><span id="l4">[Flat Color + Edged Faces ]</span></div>
<div id="frame"></div>
</div>
</body>
</html>
